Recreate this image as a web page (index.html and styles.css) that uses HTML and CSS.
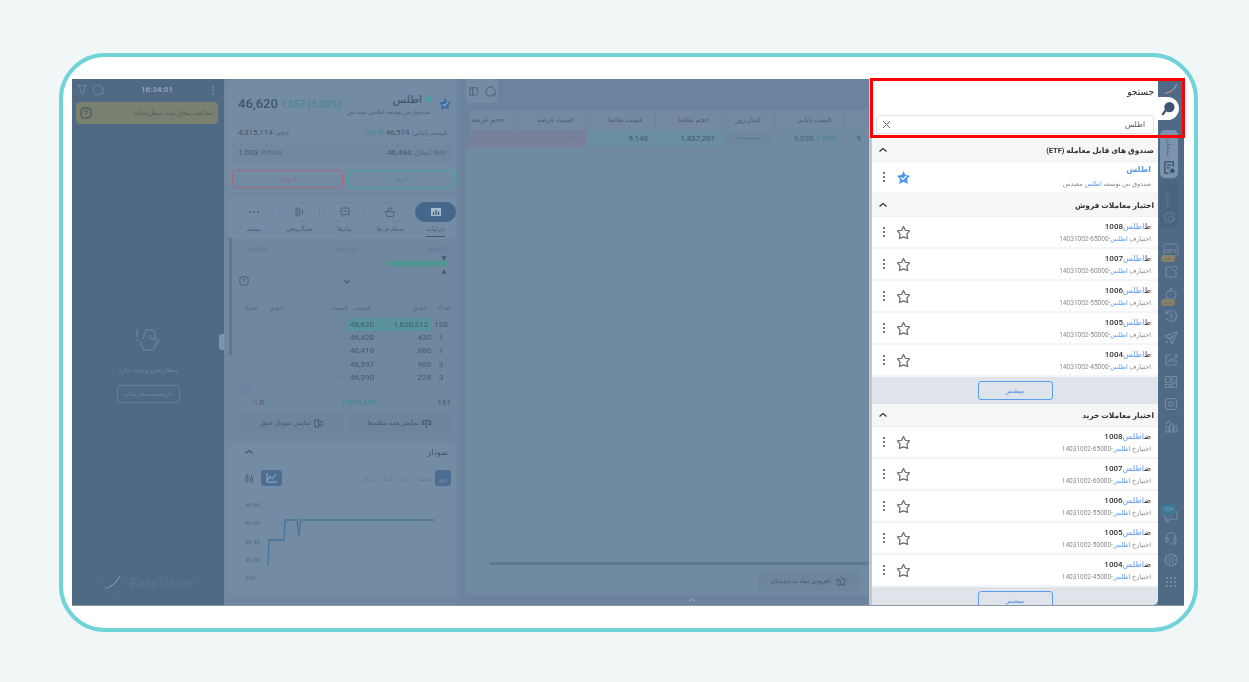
FILE: index.html
```html
<!DOCTYPE html>
<html lang="fa">
  <head>
    <title>جستجو</title>
    <meta charset="utf-8" />
    <link rel="stylesheet" href="styles.css">
  </head>
  <body>
    <svg class="defs" width="0" height="0">
      <symbol id="star" viewBox="0 0 16 16">
        <path d="M8 1.6 10 5.6 14.4 6.2 11.6 9.8 12.4 14.2 8 12.6 3.6 14.2 4.4 9.8 1.6 6.2 6 5.6Z" fill="none" stroke="currentColor" stroke-width="1.3" stroke-linejoin="round"/>
      </symbol>
      <symbol id="kebab" viewBox="0 0 4 12">
        <circle cx="2" cy="2" r="1.1" fill="currentColor"/><circle cx="2" cy="6" r="1.1" fill="currentColor"/><circle cx="2" cy="10" r="1.1" fill="currentColor"/>
      </symbol>
      <symbol id="up" viewBox="0 0 10 6">
        <path d="M1.5 4.5 5 1.5 8.5 4.5" fill="none" stroke="currentColor" stroke-width="1.3"/>
      </symbol>
      <symbol id="help" viewBox="0 0 12 12">
        <rect x="1" y="1" width="10" height="10" rx="3" fill="none" stroke="currentColor"/>
        <path d="M4.6 4.6C4.8 3 7.4 3 7.4 4.6 7.4 5.8 6 5.6 6 7M6 8.4V9" fill="none" stroke="currentColor"/>
      </symbol>
    </svg>
    <main class="page">
      <div class="frame">
        <div class="app">
          <section class="orders">
            <div class="clockbar">
              <svg width="12" height="12" viewBox="0 0 12 12"><path d="M1.5 1.5H10.5L7.2 6V10.5L4.8 9V6Z" fill="none" stroke="currentColor"/></svg>
              <svg class="gap-icon" width="12" height="12" viewBox="0 0 12 12"><path d="M10 9A5 5 0 1 1 11 6M11 6V9.5M11 9.5H8" fill="none" stroke="currentColor"/></svg>
              <b class="clock">16:34:01</b>
              <svg class="kebab-icon" width="4" height="10"><use href="#kebab"/></svg>
            </div>
            <div class="notice" dir="rtl">
              <span>ساعت مجاز ثبت سفارشات</span>
              <svg width="12" height="12"><use href="#help"/></svg>
            </div>
            <div class="empty">
              <svg width="28" height="28" viewBox="0 0 28 28"><path d="M3 2V10M3 12.6V14M9 12 12 3H20L22 12 17 12 15 8M6 15 10 23H19L25 12" fill="none" stroke="currentColor" stroke-width="1.6" stroke-linejoin="round"/></svg>
              <p dir="rtl">سفارشی وجود ندارد</p>
              <button type="button" class="ghost" dir="rtl">تاریخچه سفارشات</button>
            </div>
            <div class="brand">
              <svg width="24" height="24" viewBox="0 0 24 24"><circle cx="12" cy="12" r="11" fill="#4f6885" stroke="#55708c"/><path d="M4 18C10 18 15 13 19 6" fill="none" stroke="#77909a" stroke-width="1.4"/></svg>
              <span><b>Easy</b>Trader</span>
            </div>
          </section>

          <section class="symbol">
            <span class="grip"></span>
            <span class="thumb"></span>
            <div class="card quote">
              <div class="quote-top">
                <div class="price"><b>46,620</b> <span class="up">1,357 (3.00%)</span></div>
                <div class="name" dir="rtl">
                  <div class="name-row">
                    <svg class="fav" width="14" height="14" viewBox="0 0 16 16"><path d="M8 1 10 5.4 15 6 11.8 9.6 12.6 15 8 12.6 3.4 15 4.2 9.6 1 6 6 5.4Z" fill="#3f6ea3"/><path d="M5.4 8 7.4 10 11 6.4" fill="none" stroke="#9db3c8" stroke-width="1.2"/></svg>
                    <i class="dot"></i>
                    <strong>اطلس</strong>
                  </div>
                  <small>صندوق س.توسعه اطلس مفید-س</small>
                </div>
              </div>
              <div class="stat" dir="rtl"><span>قیمت پایانی: <b>46,574</b> <em>(2.9%)</em></span><span>حجم: <b>4,315,114</b></span></div>
              <div class="stat stat-nav" dir="rtl"><span>NAV ابطال: <b>46,484</b></span><span dir="ltr"><b>1.003</b> :P/NAV</span></div>
              <div class="trade">
                <button type="button" class="sell">فروش</button>
                <button type="button" class="buy">خرید</button>
              </div>
            </div>

            <div class="card tabs">
              <div class="tab"><i class="pill"><svg width="12" height="4" viewBox="0 0 12 4"><circle cx="2" cy="2" r="1" fill="currentColor"/><circle cx="6" cy="2" r="1" fill="currentColor"/><circle cx="10" cy="2" r="1" fill="currentColor"/></svg></i><span>بیشتر</span></div>
              <div class="tab"><i class="pill"><svg width="12" height="12" viewBox="0 0 12 12"><path d="M3 2H5V10H3ZM7 2.5V9.5M9.5 3.5V8.5" fill="none" stroke="currentColor"/></svg></i><span>همگروهی</span></div>
              <div class="tab"><i class="pill"><svg width="12" height="12" viewBox="0 0 12 12"><path d="M2 2H10V8.5H6L4 10.5V8.5H2ZM4 5.2H8" fill="none" stroke="currentColor"/></svg></i><span>پیام‌ها</span></div>
              <div class="tab"><i class="pill"><svg width="12" height="12" viewBox="0 0 12 12"><path d="M1.5 5.5H10.5L9 10.5H3ZM5 5.5 4.5 2.5 7 1.5 8 4" fill="none" stroke="currentColor"/></svg></i><span>سفارش‌ها</span></div>
              <div class="tab tab-on"><i class="pill"><svg width="12" height="12" viewBox="0 0 12 12"><path d="M1 2H11V10H1Z" fill="#a9bbcc"/><path d="M3.5 9V6M6 9V4M8.5 9V5.5" stroke="#3f5f80" stroke-width="1.4"/></svg></i><span>جزئیات</span></div>
            </div>

            <div class="range">
              <div class="range-nums"><span>43,906</span><span>45,263</span><span>46,620</span></div>
              <div class="marker">▼</div>
              <div class="range-line"><i></i></div>
              <div class="marker">▲</div>
              <div class="range-foot">
                <svg width="10" height="10"><use href="#help"/></svg>
                <svg width="8" height="5" class="flip"><use href="#up"/></svg>
              </div>
            </div>

            <div class="depth">
              <div class="drow dhead"><span>تعداد</span><span>حجم</span><span>قیمت</span><span>قیمت</span><span>حجم</span><span>تعداد</span></div>
              <div class="drow dfirst"><span class="dim">1</span><span class="dim tl">117</span><span class="dim">46,898</span><span class="mark tl">46,620</span><span class="mark">1,620,212</span><span class="c">120</span></div>
              <div class="drow"><span class="dim">1</span><span class="dim tl">9,000</span><span class="dim">47,328</span><span class="tl">46,420</span><span>430</span><span class="c">1</span></div>
              <div class="drow"><span class="dim">1</span><span class="dim tl">28</span><span class="dim">47,748</span><span class="tl">46,410</span><span>860</span><span class="c">1</span></div>
              <div class="drow"><span class="dim">1</span><span class="dim tl">29</span><span class="dim">48,225</span><span class="tl">46,397</span><span>900</span><span class="c">3</span></div>
              <div class="drow"><span class="dim">1</span><span class="dim tl">500</span><span class="dim">48,600</span><span class="tl">46,390</span><span>228</span><span class="c">3</span></div>
              <div class="dtotal-label"><svg width="10" height="10"><use href="#help"/></svg><span>کل</span></div>
              <div class="dtotal"><span>0</span><span class="sellnum">0</span><span class="up gross">1,825,449</span><span>161</span></div>
              <div class="dbuttons">
                <button type="button" dir="rtl">
                  <svg width="11" height="11" viewBox="0 0 12 12"><path d="M2 2H6V10H2ZM6 4H10V8H6Z" fill="none" stroke="currentColor"/></svg>
                  نمایش نمودار عمق</button>
                <button type="button" dir="rtl">
                  <svg width="11" height="11" viewBox="0 0 12 12"><path d="M6 1V11M2 3H10M2 3 1 7H4ZM10 3 8 7H11Z" fill="none" stroke="currentColor"/></svg>
                  نمایش همه مظنه‌ها</button>
              </div>
            </div>

            <div class="card chart">
              <div class="chart-head" dir="rtl"><b>نمودار</b><svg width="10" height="6"><use href="#up"/></svg></div>
              <div class="chart-tools" dir="rtl">
                <span class="frame-btn on">روز</span><span class="frame-btn">هفته</span><span class="frame-btn">ماه</span><span class="frame-btn">3ماه</span><span class="frame-btn">سال</span>
                <span class="mode on"><svg width="12" height="12" viewBox="0 0 12 12"><path d="M1 1V10H11M2 8 4 4 6 7 10 2" fill="none" stroke="currentColor"/></svg></span>
                <span class="mode"><svg width="12" height="12" viewBox="0 0 12 12"><path d="M3 4H5V10H3ZM7.5 6H9.5V10H7.5ZM4 1.5V4M8.5 3V6" fill="none" stroke="currentColor"/></svg></span>
              </div>
              <div class="plot">
                <div class="plot-axis"><span>46.8K</span><span>46.6K</span><span>46.4K</span><span>46.2K</span><span>46K</span></div>
                <svg class="plot-line" width="170" height="80" viewBox="0 0 170 80">
                  <path d="M1 4.500H170M1 22.500H170M1 40.500H170M1 57.500H170M1 75.500H170" stroke="#70899f"/>
                  <path d="M2 65 3 39 18 39 19 19 31 19 33 35 34.500 19 168 19" fill="none" stroke="#48749b" stroke-width="1.3"/>
                </svg>
              </div>
            </div>
          </section>

          <section class="market">
            <div class="market-tools">
              <svg width="11" height="11" viewBox="0 0 12 12"><path d="M1 2H9V6M1 2V10H6M4 2V10M7 10 11 6" fill="none" stroke="currentColor"/></svg>
              <svg width="11" height="11" viewBox="0 0 12 12"><path d="M10 9A5 5 0 1 1 11 6M11 6V9.500M11 9.500H8" fill="none" stroke="currentColor"/></svg>
            </div>
            <div class="grid-head" dir="ltr">
              <span>حجم عرضه</span><span>قیمت عرضه</span><span>قیمت تقاضا</span><span>حجم تقاضا</span><span>کندل روز</span><span>قیمت پایانی</span><span></span>
            </div>
            <div class="grid-row">
              <span class="ask">1,472</span><span class="ask">9,250</span><span class="bid">9,140</span><span class="bid">1,437,201</span>
              <span class="candle"><i></i></span>
              <span class="close">9,030 <em>1.69%</em></span><span class="cut">9</span>
            </div>
            <div class="market-fill"></div>
            <div class="hbar"></div>
            <div class="market-foot">
              <button type="button" class="add" dir="rtl">
                <svg width="12" height="12" viewBox="0 0 16 16"><path d="M8 1.600 10 5.600 14.400 6.200 11.600 9.800 12 12M8 12.600 3.600 14.200 4.400 9.800 1.600 6.200 6 5.600ZM11 11V15M9 13H13" fill="none" stroke="currentColor" stroke-width="1.200"/></svg>
                افزودن نماد به دیده‌بان</button>
            </div>
            <div class="market-tail"><svg width="8" height="5"><use href="#up"/></svg></div>
          </section>

          <section class="search">
            <header class="search-head" dir="rtl">
              <h1>جستجو</h1>
              <label class="search-box">
                <span>اطلس</span>
                <svg width="9" height="9" viewBox="0 0 9 9"><path d="M1 1 8 8M8 1 1 8" stroke="#666" stroke-width="1"/></svg>
              </label>
            </header>
            <div class="results" dir="rtl">
              <h2 class="group">صندوق های قابل معامله (ETF)<svg width="10" height="6"><use href="#up"/></svg></h2>
              <div class="row row-etf">
                <div><div class="hit">اطلس</div><small>صندوق س.توسعه <span class="hit">اطلس</span> مفیدس</small></div>
                <div class="row-tools">
                  <svg width="15" height="15" viewBox="0 0 16 16"><path d="M8 1 10 5.400 15 6 11.800 9.600 12.600 15 8 12.600 3.400 15 4.200 9.600 1 6 6 5.400Z" fill="#4e97ee"/><path d="M5.400 8 7.400 10 11 6.400" fill="none" stroke="#fff" stroke-width="1.300"/></svg>
                  <svg class="dots" width="4" height="12"><use href="#kebab"/></svg>
                </div>
              </div>
              <h2 class="group">اختیار معاملات فروش<svg width="10" height="6"><use href="#up"/></svg></h2>
              <div class="row"><div><b>ط<span class="hit">اطلس</span>1008</b><small>اختیارف <span class="hit">اطلس</span>-65000-14031002</small></div><div class="row-tools"><svg width="15" height="15"><use href="#star"/></svg><svg class="dots" width="4" height="12"><use href="#kebab"/></svg></div></div>
              <div class="row"><div><b>ط<span class="hit">اطلس</span>1007</b><small>اختیارف <span class="hit">اطلس</span>-60000-14031002</small></div><div class="row-tools"><svg width="15" height="15"><use href="#star"/></svg><svg class="dots" width="4" height="12"><use href="#kebab"/></svg></div></div>
              <div class="row"><div><b>ط<span class="hit">اطلس</span>1006</b><small>اختیارف <span class="hit">اطلس</span>-55000-14031002</small></div><div class="row-tools"><svg width="15" height="15"><use href="#star"/></svg><svg class="dots" width="4" height="12"><use href="#kebab"/></svg></div></div>
              <div class="row"><div><b>ط<span class="hit">اطلس</span>1005</b><small>اختیارف <span class="hit">اطلس</span>-50000-14031002</small></div><div class="row-tools"><svg width="15" height="15"><use href="#star"/></svg><svg class="dots" width="4" height="12"><use href="#kebab"/></svg></div></div>
              <div class="row"><div><b>ط<span class="hit">اطلس</span>1004</b><small>اختیارف <span class="hit">اطلس</span>-45000-14031002</small></div><div class="row-tools"><svg width="15" height="15"><use href="#star"/></svg><svg class="dots" width="4" height="12"><use href="#kebab"/></svg></div></div>
              <div class="more"><button type="button">بیشتر</button></div>
              <h2 class="group">اختیار معاملات خرید<svg width="10" height="6"><use href="#up"/></svg></h2>
              <div class="row"><div><b>ض<span class="hit">اطلس</span>1008</b><small>اختیارخ <span class="hit">اطلس</span>-65000-14031002</small></div><div class="row-tools"><svg width="15" height="15"><use href="#star"/></svg><svg class="dots" width="4" height="12"><use href="#kebab"/></svg></div></div>
              <div class="row"><div><b>ض<span class="hit">اطلس</span>1007</b><small>اختیارخ <span class="hit">اطلس</span>-60000-14031002</small></div><div class="row-tools"><svg width="15" height="15"><use href="#star"/></svg><svg class="dots" width="4" height="12"><use href="#kebab"/></svg></div></div>
              <div class="row"><div><b>ض<span class="hit">اطلس</span>1006</b><small>اختیارخ <span class="hit">اطلس</span>-55000-14031002</small></div><div class="row-tools"><svg width="15" height="15"><use href="#star"/></svg><svg class="dots" width="4" height="12"><use href="#kebab"/></svg></div></div>
              <div class="row"><div><b>ض<span class="hit">اطلس</span>1005</b><small>اختیارخ <span class="hit">اطلس</span>-50000-14031002</small></div><div class="row-tools"><svg width="15" height="15"><use href="#star"/></svg><svg class="dots" width="4" height="12"><use href="#kebab"/></svg></div></div>
              <div class="row"><div><b>ض<span class="hit">اطلس</span>1004</b><small>اختیارخ <span class="hit">اطلس</span>-45000-14031002</small></div><div class="row-tools"><svg width="15" height="15"><use href="#star"/></svg><svg class="dots" width="4" height="12"><use href="#kebab"/></svg></div></div>
              <div class="more"><button type="button">بیشتر</button></div>
            </div>
          </section>

          <nav class="rail">
            <svg class="rail-logo" width="14" height="12" viewBox="0 0 14 12"><path d="M1 10C6 10 10 7 13 1" fill="none" stroke="#7fa0a8" stroke-width="1.300"/><path d="M1 10C3 10 5 9.500 7 8.500" fill="none" stroke="#b0806a" stroke-width="1.300"/></svg>
            <div class="rail-active">
              <svg width="15" height="15" viewBox="0 0 16 16"><circle cx="9" cy="6.500" r="5.500" fill="#3f5570"/><path d="M5 10 2 14" stroke="#3f5570" stroke-width="2.500" stroke-linecap="round"/></svg>
            </div>
            <div class="rail-tab rail-tab-on">
              <span>دیده‌بان</span>
              <svg width="13" height="13" viewBox="0 0 14 14"><path d="M2 1H11V6M2 1V13H6M4 4.500H9M4 7.500H7" fill="none" stroke="#36506c" stroke-width="1.400"/><path d="M10 7 11.200 9.300 13.500 9.600 11.800 11.200 12.200 13.500 10 12.400 7.800 13.500 8.200 11.200 6.500 9.600 8.800 9.300Z" fill="#36506c"/></svg>
            </div>
            <div class="rail-tab">
              <span>پرتفوی</span>
              <svg width="13" height="13" viewBox="0 0 14 14"><circle cx="7" cy="7" r="5.500" fill="none" stroke="currentColor" stroke-width="1.300"/><circle cx="8" cy="8" r="2.500" fill="none" stroke="currentColor"/></svg>
            </div>
            <div class="rail-icons">
              <div class="rail-item"><svg width="16" height="14" viewBox="0 0 16 14"><rect x="1" y="1" width="14" height="12" rx="2" fill="none" stroke="currentColor"/></svg><b class="opt">OPT</b><i class="tag">جدید</i></div>
              <div class="rail-item"><svg width="14" height="14" viewBox="0 0 14 14"><path d="M7 2H2V12H12V7" fill="none" stroke="currentColor" stroke-width="1.200"/><circle cx="10.500" cy="3.500" r="2.500" fill="none" stroke="currentColor"/></svg></div>
              <div class="rail-item"><svg width="14" height="14" viewBox="0 0 14 14"><circle cx="7" cy="2" r="1.200" fill="currentColor"/><rect x="2" y="4" width="10" height="8" rx="4" fill="none" stroke="currentColor" stroke-width="1.200"/></svg><i class="tag">جدید</i></div>
              <div class="rail-item"><svg width="14" height="14" viewBox="0 0 14 14"><path d="M2.500 4A5.500 5.500 0 1 1 2 9M2 1.500V4.500H5M7 4V7.500L9.500 9" fill="none" stroke="currentColor" stroke-width="1.200"/></svg></div>
              <div class="rail-item"><svg width="14" height="14" viewBox="0 0 14 14"><path d="M13 1 1 5 5 8 9 5 6.500 9 8 13ZM2 12 4 10" fill="none" stroke="currentColor" stroke-width="1.200" stroke-linejoin="round"/></svg></div>
              <div class="rail-item"><svg width="14" height="14" viewBox="0 0 14 14"><path d="M7 2H2V12H12V7M4 9 7 6 9 8 13 2M10.500 2H13V4.500" fill="none" stroke="currentColor" stroke-width="1.200"/></svg></div>
              <div class="rail-item"><svg width="14" height="14" viewBox="0 0 14 14"><path d="M1.500 1.500H6V7.500H1.500ZM8 1.500H12.500V6H8ZM1.500 9.500H6V12.500H1.500ZM8 8H12.500V12.500H8Z" fill="none" stroke="currentColor" stroke-width="1.200"/></svg></div>
              <div class="rail-item"><svg width="14" height="14" viewBox="0 0 14 14"><rect x="1.500" y="1.500" width="11" height="11" rx="2.500" fill="none" stroke="currentColor" stroke-width="1.200"/><rect x="5" y="5" width="4" height="4" fill="none" stroke="currentColor"/></svg></div>
              <div class="rail-item"><svg width="14" height="14" viewBox="0 0 14 14"><path d="M1 13H13M2 13V8H5V13M6 13V5H9V13M10 13V7H13V13M2 5 6 1.500" fill="none" stroke="currentColor" stroke-width="1.100"/></svg></div>
            </div>
            <div class="rail-bottom">
              <div class="rail-item"><svg width="14" height="14" viewBox="0 0 14 14"><path d="M13 2V10H6L3 13V10H1V6" fill="none" stroke="currentColor" stroke-width="1.200"/><path d="M4 7H10" stroke="currentColor" stroke-dasharray="1.500 1.500"/></svg><i class="count">104</i></div>
              <div class="rail-item"><svg width="14" height="14" viewBox="0 0 14 14"><path d="M2.500 8V6A4.500 4.500 0 0 1 11.500 6V8M2 7H4V11H2ZM10 7H12V11H10ZM11 11V13H7" fill="none" stroke="currentColor" stroke-width="1.100"/></svg></div>
              <div class="rail-item"><svg width="14" height="14" viewBox="0 0 14 14"><path d="M5.500 1H8.500L9 3 11 2.500 13 5.500 11.500 7 13 8.500 11 11.500 9 11 8.500 13H5.500L5 11 3 11.500 1 8.500 2.500 7 1 5.500 3 2.500 5 3Z" fill="none" stroke="currentColor" stroke-width="1.100" stroke-linejoin="round"/><circle cx="7" cy="7" r="2" fill="none" stroke="currentColor"/></svg></div>
              <div class="rail-item"><svg width="12" height="12" viewBox="0 0 12 12"><g fill="currentColor"><rect x="1" y="1" width="2" height="2"/><rect x="5" y="1" width="2" height="2"/><rect x="9" y="1" width="2" height="2"/><rect x="1" y="5" width="2" height="2"/><rect x="5" y="5" width="2" height="2"/><rect x="9" y="5" width="2" height="2"/><rect x="1" y="9" width="2" height="2"/><rect x="5" y="9" width="2" height="2"/><rect x="9" y="9" width="2" height="2"/></g></svg></div>
            </div>
          </nav>

          <div class="highlight"></div>
        </div>
      </div>
    </main>
  </body>
</html>
```

FILE: styles.css
```css
* {
  box-sizing: border-box;
  font-family: Roboto, "DejaVu Sans", sans-serif;
}
html {
  background-color: #f1f7f7;
}
body {
  margin: 0;
}
button {
  padding: 0;
  background: none;
  font-size: 8px;
}
em {
  font-style: normal;
}
.defs {
  position: absolute;
}
.page {
  height: 682px;
  padding: 53px 0 0 59px;
  overflow: hidden;
}
.frame {
  width: 1139px;
  height: 579px;
  padding: 22px 10px 0 9px;
  border: 4px solid #6fd3d8;
  border-radius: 46px;
  background-color: white;
}
.app {
  position: relative;
  display: flex;
  width: 1112px;
  height: 527px;
  border-bottom: 1px solid #8d9aa6;
  background-color: #6b839c;
}
.app > section,
.app > nav {
  min-width: 0;
  filter: blur(0.3px);
}
.highlight {
  position: absolute;
  left: 798px;
  top: -1px;
  width: 315px;
  height: 60px;
  border: 3px solid #f00;
}

/* left column */
.orders {
  display: flex;
  flex-direction: column;
  flex: 0 0 152px;
  background-color: #506a85;
  color: #6d859e;
}
.clockbar {
  display: flex;
  align-items: center;
  height: 21px;
  padding: 0 9px 0 4px;
}
.gap-icon {
  margin-left: 4px;
}
.clock {
  margin: 0 auto 0 37px;
  font-size: 8px;
  color: #8fa3b8;
}
.kebab-icon {
  color: #7b92aa;
}
.notice {
  display: flex;
  align-items: center;
  justify-content: space-between;
  height: 22px;
  margin: 2px 6px 0 4px;
  padding: 0 6px 0 4px;
  border-radius: 4px;
  background-color: #79806f;
  color: #515c60;
  font-size: 7px;
}
.notice svg {
  color: #3f5068;
}
.empty {
  display: flex;
  flex-direction: column;
  align-items: center;
  margin-top: 203px;
  color: #667f99;
}
.empty p {
  margin: 11px 0 12px;
  font-size: 6px;
  font-weight: bold;
  color: #667f99;
}
.ghost {
  width: 63px;
  height: 18px;
  border: 1px solid #667f99;
  border-radius: 3px;
  color: #667f99;
  font-size: 5.500px;
  font-weight: bold;
}
.brand {
  display: flex;
  align-items: center;
  gap: 5px;
  margin: auto 0 11px 29px;
  color: #5b7590;
  font-size: 13px;
}
.brand b {
  font-weight: 500;
}

/* symbol panel */
.symbol {
  position: relative;
  display: flex;
  flex-direction: column;
  flex: 0 0 236px;
  padding-top: 1px;
  border-radius: 6px 0 6px 0;
  background-color: #6f879f;
  color: #44566a;
}
.grip {
  position: absolute;
  left: -5px;
  top: 255px;
  width: 5px;
  height: 16px;
  border-radius: 3px 0 0 3px;
  background-color: #7e95ab;
}
.thumb {
  position: absolute;
  left: 5px;
  top: 159px;
  width: 3px;
  height: 117px;
  background-color: #5f7891;
}
.card {
  margin: 0 4px;
  border-radius: 5px;
  background-color: #738ba3;
}
.quote {
  height: 112px;
  padding: 0 4px;
}
.quote-top {
  display: flex;
  justify-content: space-between;
  height: 43px;
  padding: 12px 0 0 6px;
}
.price {
  font-size: 10px;
  line-height: 24px;
  white-space: nowrap;
  color: #44566a;
}
.price b {
  font-size: 13px;
  font-weight: 500;
}
.up {
  color: #3f8a8c;
}
.name-row {
  display: flex;
  align-items: center;
  height: 14px;
}
.fav {
  margin: 10px 0 0 7px;
}
.dot {
  width: 6px;
  height: 6px;
  margin-left: 3px;
  border-radius: 2px;
  background-color: #4f9e9b;
}
.name-row strong {
  font-size: 11px;
  font-weight: normal;
  color: #3f5164;
}
.name small {
  display: block;
  margin: 2px 22px 0 0;
  font-size: 6px;
  color: #51657a;
  white-space: nowrap;
}
.stat {
  display: flex;
  justify-content: space-between;
  height: 20px;
  padding: 0 5px 0 6px;
  font-size: 7px;
  line-height: 20px;
  color: #56697f;
}
.stat b {
  font-size: 8px;
  font-weight: 400;
  color: #46586c;
}
.stat em {
  color: #3f8a8c;
}
.stat-nav {
  background-color: #7088a0;
}
.trade {
  display: flex;
  gap: 5px;
  margin-top: 7px;
}
.trade button {
  height: 18px;
  border-radius: 3px;
  font-weight: 500;
  font-size: 7px;
}
.sell {
  flex: 0 0 111px;
  border: 1px solid #a06a7e;
  color: #8a7080;
}
.buy {
  flex: 0 0 107px;
  border: 1px solid #4fa3a3;
  color: #459094;
}
.tabs {
  display: flex;
  gap: 4.500px;
  height: 42px;
  margin-top: 5px;
  padding: 5px 0 0 5px;
}
.tab {
  display: flex;
  flex-direction: column;
  align-items: center;
  flex: 0 0 41px;
  font-size: 6.500px;
  white-space: nowrap;
  color: #4f6377;
}
.pill {
  display: flex;
  align-items: center;
  justify-content: center;
  width: 41px;
  height: 20px;
  margin-bottom: 3px;
  border: 1px solid #6e86a0;
  border-radius: 10px;
}
.tab-on .pill {
  border: none;
  background-color: #45678c;
}
.tab-on span {
  padding-bottom: 3px;
  border-bottom: 1px solid #3f5770;
}
.range {
  margin: 7px 13px 0 9px;
  font-size: 7px;
  color: #627a93;
}
.range-nums {
  display: flex;
  justify-content: space-between;
  padding: 0 0 0 14px;
}
.marker {
  height: 7px;
  padding-right: 1px;
  font-size: 6px;
  line-height: 7px;
  text-align: right;
  color: #43576b;
}
.range-line {
  height: 6px;
  margin-left: 14px;
  background: linear-gradient(#6a829a, #6a829a) 0 50% / 100% 1px no-repeat;
}
.range-line i {
  display: block;
  width: 59px;
  height: 5px;
  margin-left: auto;
  background-color: #4f9590;
}
.range-foot {
  display: flex;
  align-items: center;
  justify-content: space-between;
  margin-top: 2px;
  padding: 0 96px 0 6px;
  color: #43576b;
}
.flip {
  transform: rotate(180deg);
}
.depth {
  margin: 13px 0 0 0;
  padding: 0 9px 0 17px;
  font-size: 8px;
  color: #45586c;
}
.drow {
  display: grid;
  grid-template-columns: 17px 42px 48px 40px 43px 20px;
  align-items: center;
  height: 13.300px;
  text-align: right;
}
.drow .tl {
  text-align: left;
  padding-left: 2px;
}
.drow .c {
  text-align: center;
}
.dhead {
  height: 18px;
  margin-bottom: 1px;
  font-size: 7px;
  white-space: nowrap;
  color: #56697f;
}
.dhead span:nth-child(2) {
  padding-right: 16px;
}
.dhead span:nth-child(4) {
  padding-right: 18px;
}
.dhead span:nth-child(5) {
  padding-right: 4px;
}
.dfirst {
  height: 13px;
}
.dim {
  color: #6b839c;
}
.mark {
  height: 13px;
  padding-right: 3px;
  background-color: #5a9399;
  line-height: 13px;
}
.dtotal-label {
  display: flex;
  justify-content: space-between;
  align-items: center;
  height: 12px;
  padding: 0 1px 0 0;
  font-size: 7px;
  color: #65809a;
}
.dtotal {
  display: grid;
  grid-template-columns: 13px 10px 112px 1fr;
  align-items: center;
  height: 13px;
  text-align: right;
  direction: ltr;
}
.dtotal span:first-child {
  grid-column: 2;
  grid-row: 1;
}
.dtotal .sellnum {
  grid-column: 1;
  grid-row: 1;
  margin-left: 12px;
  text-align: left;
}
.sellnum {
  color: #7d6f72;
}
.gross {
  font-size: 8px;
}
.dbuttons {
  display: flex;
  gap: 5px;
  margin: 4px 0 0 0;
}
.dbuttons button {
  flex: 1 1 0;
  display: flex;
  align-items: center;
  justify-content: center;
  gap: 2px;
  height: 20px;
  border: none;
  border-radius: 3px;
  background-color: #6c849c;
  color: #46596d;
  font-size: 6.500px;
  font-weight: 500;
  white-space: nowrap;
}
.chart {
  height: 152px;
  margin-top: 10px;
  padding: 0 5px;
}
.chart-head {
  display: flex;
  justify-content: space-between;
  align-items: center;
  height: 18px;
  padding: 0 3px 0 11px;
  font-size: 8px;
}
.chart-head b {
  font-weight: 500;
}
.chart-tools {
  display: flex;
  align-items: center;
  gap: 2px;
  margin-top: 9px;
  padding-left: 5px;
  font-size: 6px;
}
.frame-btn,
.mode {
  display: flex;
  align-items: center;
  justify-content: center;
  min-width: 16px;
  height: 16px;
  padding: 0 3px;
  border-radius: 3px;
  background-color: #748ca3;
  color: #62798f;
}
.frame-btn.on {
  background-color: #4b6e92;
  color: #7f97ae;
}
.mode {
  width: 21px;
  color: #50657a;
}
.mode.on {
  margin-right: auto;
  background-color: #4b6e92;
  color: #9bb0c4;
}
.plot {
  display: flex;
  margin-top: 15px;
  font-size: 6px;
  color: #566c83;
}
.plot-axis {
  display: flex;
  flex-direction: column;
  justify-content: space-between;
  flex: 0 0 35px;
  height: 80px;
  padding-left: 12px;
}
.plot-line {
  margin-left: -2px;
}

/* market watch */
.market {
  display: flex;
  flex-direction: column;
  flex: 0 0 403px;
  margin-left: 6px;
  font-size: 7px;
  color: #4c5f74;
}
.market-tools {
  display: flex;
  align-items: center;
  gap: 5px;
  flex: 0 0 24px;
  width: 32px;
  padding-left: 3px;
  border-radius: 0 0 4px 0;
  background-color: #738ba3;
}
.grid-head,
.grid-row {
  display: grid;
  grid-template-columns: 48px 69px 69px 67px 52px 70px 24px;
  margin-left: 4px;
  overflow: hidden;
}
.grid-head {
  height: 20px;
  margin-top: 7px;
  line-height: 20px;
  background-color: #738aa2;
  text-align: right;
}
.grid-head span {
  padding-right: 13px;
  white-space: nowrap;
  border-right: 1px solid #6b839c;
}
.grid-row {
  height: 17px;
  line-height: 17px;
  font-size: 8px;
  text-align: right;
  background-color: #708aa2;
}
.grid-row span {
  padding-right: 8px;
  white-space: nowrap;
}
.ask {
  background-color: #788199;
  color: #6f7d97;
}
.bid {
  background-color: #6a8ea2;
  color: #44566a;
}
.candle {
  display: flex;
  align-items: center;
  background-color: #6f879f;
}
.candle i {
  width: 24px;
  height: 1px;
  margin-left: 15px;
  background-color: #467f8e;
}
.close em {
  color: #3f8a8c;
}
.market-fill {
  flex: 1 1 auto;
  background-color: #708aa2;
}
.hbar {
  height: 3px;
  padding-left: 24px;
  background: linear-gradient(#5f7991, #5f7991) 24px 0 no-repeat #708aa2;
}
.market-foot {
  display: flex;
  justify-content: flex-end;
  padding: 5px 9px 4px 0;
  background-color: #708aa2;
}
.add {
  display: flex;
  align-items: center;
  justify-content: center;
  gap: 5px;
  width: 102px;
  height: 21px;
  border: none;
  border-radius: 3px;
  background-color: #6d859d;
  color: #465a6e;
  font-size: 6.500px;
  white-space: nowrap;
}
.market-tail {
  display: flex;
  justify-content: center;
  align-items: center;
  height: 10px;
  padding-left: 48px;
  color: #8fa3b8;
}

/* search panel */
.search {
  display: flex;
  flex-direction: column;
  flex: 0 0 289px;
  border-left: 3px solid #c3c7cd;
  border-radius: 0 0 6px 0;
  overflow: hidden;
  background-color: white;
}
.search-head {
  flex: 0 0 60px;
  padding: 6px 4px 0 4px;
}
.search-head h1 {
  margin: 0 0 16px;
  font-size: 9px;
  font-weight: 500;
  line-height: 14px;
  color: #222;
}
.search-box {
  display: flex;
  justify-content: space-between;
  align-items: center;
  height: 19px;
  padding: 0 8px 0 5px;
  border: 1px solid #e0e2e6;
  border-radius: 3px;
  font-size: 7.500px;
  color: #555;
}
.results {
  flex: 1 1 auto;
}
.group {
  display: flex;
  justify-content: space-between;
  align-items: center;
  height: 23px;
  margin: 0;
  padding: 0 4px 0 6px;
  background-color: #f6f6f6;
  border-bottom: 1px solid #eef0f3;
  font-size: 7.500px;
  font-weight: bold;
  color: #333;
}
.row {
  display: flex;
  justify-content: space-between;
  align-items: center;
  height: 32px;
  padding: 0 7px 0 10px;
  border-bottom: 2px solid #f4f5f8;
}
.row b {
  display: block;
  font-size: 8px;
  font-weight: 500;
  line-height: 14px;
  color: #333;
}
.row small {
  display: block;
  font-size: 6.500px;
  line-height: 11px;
  color: #8a8a8a;
}
.row-etf .hit {
  font-size: 8px;
  font-weight: bold;
  line-height: 14px;
}
.row-etf small .hit {
  font-size: 6.500px;
  font-weight: normal;
}
.hit {
  color: #5a9cf0;
}
.row-tools {
  display: flex;
  align-items: center;
  gap: 10px;
  color: #6a6a6a;
}
.dots {
  color: #555;
}
.more {
  display: flex;
  justify-content: center;
  height: 27px;
  padding-top: 4px;
  background-color: #dfe3ea;
}
.more button {
  width: 75px;
  height: 19px;
  border: 1px solid #5a9cf0;
  border-radius: 3px;
  color: #6d9fdc;
  font-weight: bold;
  font-size: 6.500px;
}

/* right rail */
.rail {
  display: flex;
  flex-direction: column;
  flex: 0 0 26px;
  background-color: #506a85;
  color: #728aa3;
}
.rail-logo {
  align-self: center;
  margin-top: 4px;
}
.rail-active {
  display: flex;
  align-items: center;
  justify-content: center;
  width: 21px;
  height: 23px;
  margin-top: 2px;
  border-radius: 0 12px 12px 0;
  background-color: white;
}
.rail-tab {
  display: flex;
  flex-direction: column;
  align-items: center;
  justify-content: flex-end;
  gap: 3px;
  width: 18px;
  height: 48px;
  margin: 10px 0 0 2px;
  padding-bottom: 4px;
  border-radius: 5px;
  background-color: #4a637e;
  font-size: 6px;
  color: #647d97;
}
.rail-tab span {
  writing-mode: vertical-rl;
  white-space: nowrap;
}
.rail-tab + .rail-tab {
  margin-top: 2px;
}
.rail-tab-on {
  background-color: #7c93ad;
  color: #4a6078;
}
.rail-icons {
  margin-top: 11px;
}
.rail-bottom {
  margin-top: auto;
  padding-bottom: 12px;
}
.rail-item {
  position: relative;
  display: flex;
  align-items: center;
  justify-content: center;
  height: 22px;
}
.opt {
  position: absolute;
  font-size: 6px;
  color: #728aa3;
}
.tag {
  position: absolute;
  left: 3px;
  bottom: -1px;
  width: 14px;
  height: 7px;
  border-radius: 4px;
  background-color: #8c8068;
  font-size: 4px;
  font-style: normal;
  line-height: 7px;
  text-align: center;
  color: #5a6571;
}
.count {
  position: absolute;
  left: 3px;
  top: 0;
  width: 15px;
  height: 9px;
  border-radius: 3px;
  background-color: #3c7898;
  font-size: 5px;
  font-style: normal;
  line-height: 9px;
  text-align: center;
  color: #86a6bd;
}
```
